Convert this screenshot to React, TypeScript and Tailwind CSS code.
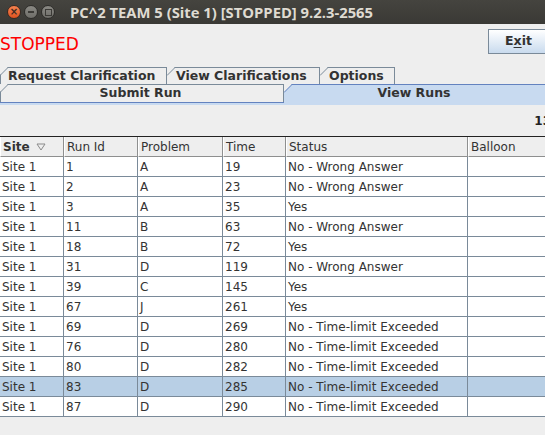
import React from 'react';

type Run = { site: string; id: string; problem: string; time: string; status: string };

const runs: Run[] = [
  { site: 'Site 1', id: '1', problem: 'A', time: '19', status: 'No - Wrong Answer' },
  { site: 'Site 1', id: '2', problem: 'A', time: '23', status: 'No - Wrong Answer' },
  { site: 'Site 1', id: '3', problem: 'A', time: '35', status: 'Yes' },
  { site: 'Site 1', id: '11', problem: 'B', time: '63', status: 'No - Wrong Answer' },
  { site: 'Site 1', id: '18', problem: 'B', time: '72', status: 'Yes' },
  { site: 'Site 1', id: '31', problem: 'D', time: '119', status: 'No - Wrong Answer' },
  { site: 'Site 1', id: '39', problem: 'C', time: '145', status: 'Yes' },
  { site: 'Site 1', id: '67', problem: 'J', time: '261', status: 'Yes' },
  { site: 'Site 1', id: '69', problem: 'D', time: '269', status: 'No - Time-limit Exceeded' },
  { site: 'Site 1', id: '76', problem: 'D', time: '280', status: 'No - Time-limit Exceeded' },
  { site: 'Site 1', id: '80', problem: 'D', time: '282', status: 'No - Time-limit Exceeded' },
  { site: 'Site 1', id: '83', problem: 'D', time: '285', status: 'No - Time-limit Exceeded' },
  { site: 'Site 1', id: '87', problem: 'D', time: '290', status: 'No - Time-limit Exceeded' },
];

// column widths include the 1px grid line on the right
const cols = [
  { label: 'Site', w: 'w-[64px]' },
  { label: 'Run Id', w: 'w-[74px]' },
  { label: 'Problem', w: 'w-[85px]' },
  { label: 'Time', w: 'w-[63px]' },
  { label: 'Status', w: 'w-[182px]' },
  { label: 'Balloon', w: 'w-[96px]' },
];

/** Metal-style slanted top-left corner of a tab. */
function Corner({ stroke, edge }: { stroke: string; edge?: boolean }) {
  return (
    <svg
      width="9"
      height="9"
      viewBox="0 0 9 9"
      className={`absolute top-[-1px] ${edge ? 'left-[-1px]' : 'left-0'}`}
    >
      <polygon points="0,0 8,0 0,8" fill="#eeeeee" />
      <line x1="0" y1="8.5" x2="8.5" y2="0" stroke={stroke} strokeWidth="1" />
    </svg>
  );
}

function WindowButtons() {
  return (
    <div className="flex items-center gap-[3px] pl-[7px]">
      <span className="w-[14px] h-[14px] rounded-full bg-gradient-to-b from-[#f5834f] to-[#e0521e] border border-[#3a2a22] flex items-center justify-center text-[#3c2a22] text-[10px] leading-none font-bold">
        ×
      </span>
      <span className="w-[14px] h-[14px] rounded-full bg-gradient-to-b from-[#8a8984] to-[#6f6e69] border border-[#2e2d2a] flex items-center justify-center">
        <span className="w-[6px] h-[2px] bg-[#3c3b37]" />
      </span>
      <span className="w-[14px] h-[14px] rounded-full bg-gradient-to-b from-[#8a8984] to-[#6f6e69] border border-[#2e2d2a] flex items-center justify-center">
        <span className="w-[7px] h-[7px] border border-[#3c3b37]" />
      </span>
    </div>
  );
}

export default function App() {
  return (
    <div className="w-[545px] h-[435px] overflow-hidden bg-[#eeeeee] font-['DejaVu_Sans',sans-serif] text-[12px] text-[#333333]">
      {/* title bar */}
      <div className="h-[24px] flex items-center bg-gradient-to-b from-[#45443f] to-[#3a3935]">
        <WindowButtons />
        <span className="ml-[15px] font-['Open_Sans',sans-serif] font-bold text-[14.8px] text-[#dfdbd2] leading-none">
          PC^2 TEAM 5 (Site 1) [STOPPED] 9.2.3-2565
        </span>
      </div>

      <div className="w-[564px]">
        {/* status + exit */}
        <div className="h-[43px] flex items-start">
          <span className="mt-[10px] text-[17px] leading-[20px] text-[#ff0000]">STOPPED</span>
          <button className="ml-auto mt-[5px] w-[76px] h-[25px] border border-[#7a8a99] bg-gradient-to-b from-[#ffffff] to-[#c9dbee] font-bold text-[12.5px] text-[#333333] flex items-center pl-[16px]">
            E<span className="underline underline-offset-2">x</span>it
          </button>
        </div>

        {/* tabs */}
        <div className="flex font-bold text-[12.5px]">
          <div className="relative w-[167px] h-[17px] shrink-0 flex items-center border-t border-l border-r border-[#7a8a99] pl-[7px]">
            <Corner stroke="#7a8a99" edge />
            Request Clarification
          </div>
          <div className="relative w-[153px] h-[17px] shrink-0 flex items-center border-t border-r border-[#7a8a99] pl-[9px]">
            <Corner stroke="#7a8a99" />
            View Clarifications
          </div>
          <div className="relative w-[75px] h-[17px] shrink-0 flex items-center border-t border-r border-[#7a8a99] pl-[9px]">
            <Corner stroke="#7a8a99" />
            Options
          </div>
        </div>
        <div className="flex font-bold text-[12.5px]">
          <div className="relative w-[284px] h-[18px] shrink-0 flex items-center justify-center border-t border-r border-l border-[#7a8a99] bg-[#eeeeee] pr-[3px]">
            <Corner stroke="#7a8a99" edge />
            Submit Run
          </div>
          <div className="relative flex-1 h-[18px] flex items-center justify-center border-t border-[#6382bf] bg-[#c8daf0] pr-[20px]">
            <Corner stroke="#6382bf" />
            View Runs
          </div>
        </div>
        <div className="flex h-[3px]">
          <div className="w-[284px] border-t border-[#6382bf] bg-[#c8daf0]" />
          <div className="flex-1 bg-[#c8daf0]" />
        </div>

        {/* count */}
        <div className="h-[31px] flex justify-end items-start pt-[9px] pr-[13px] font-bold leading-[14px] text-[#222222]">
          13
        </div>

        {/* table */}
        <div className="border-t border-[#222222]">
          <div className="flex">
            {cols.map((c, i) => (
              <div
                key={c.label}
                className={`${c.w} h-[20px] shrink-0 flex items-center gap-[6px] pl-[2px] border-l border-l-white border-r border-r-[#8e8f8f] border-b border-b-[#8e8f8f] bg-[#eeeeee] leading-[14px] ${
                  i === 0 ? 'font-bold' : ''
                }`}
              >
                {c.label}
                {i === 0 && (
                  <svg width="10" height="8" viewBox="0 0 10 8">
                    <polygon points="1,1 9,1 5,7" fill="none" stroke="#8a8a8a" strokeWidth="1" />
                  </svg>
                )}
              </div>
            ))}
          </div>
          {runs.map((r) => {
            const vals = [r.site, r.id, r.problem, r.time, r.status, ''];
            const sel = r.id === '83';
            return (
              <div key={r.id} className={`flex ${sel ? 'bg-[#b8cfe5]' : 'bg-white'}`}>
                {vals.map((v, i) => (
                  <div
                    key={i}
                    className={`${cols[i].w} h-[20px] shrink-0 flex items-center pl-[2px] pt-[1px] border-r border-b border-[#7a8a99] leading-[14px] whitespace-nowrap`}
                  >
                    {v}
                  </div>
                ))}
              </div>
            );
          })}
        </div>
      </div>
    </div>
  );
}
